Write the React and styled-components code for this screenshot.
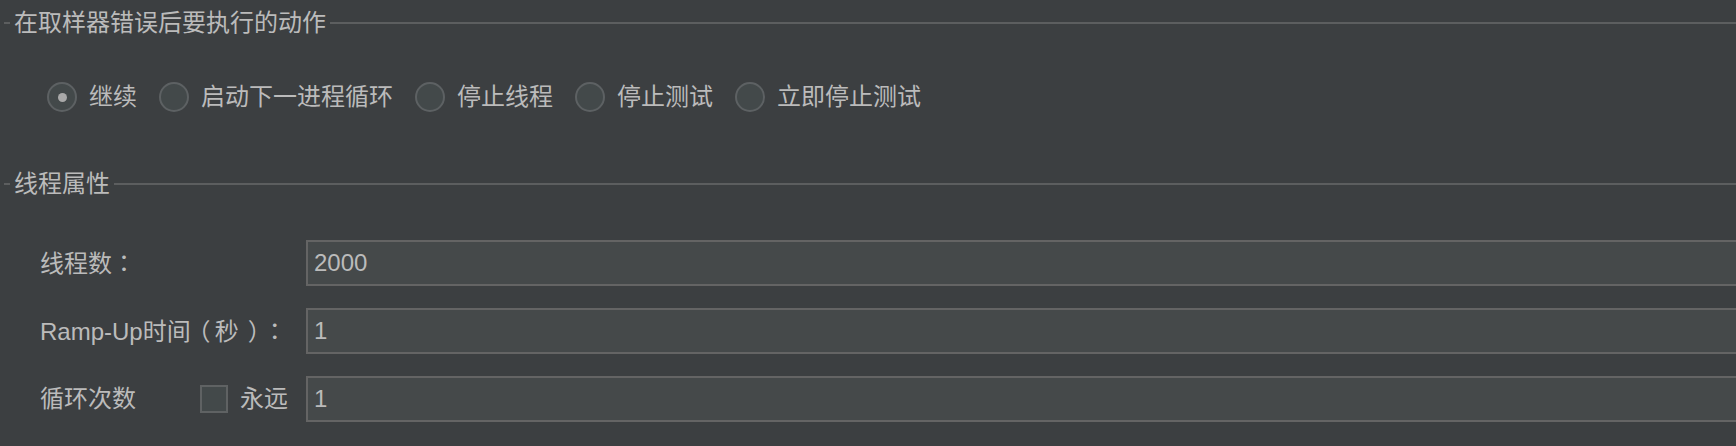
import React from "react";
import styled, { createGlobalStyle } from "styled-components";

const GlobalStyle = createGlobalStyle`
  html, body {
    margin: 0;
    padding: 0;
    background: #3c3f41;
    overflow: hidden;
  }
  body {
    font-family: "Liberation Sans", "Noto Sans CJK SC", sans-serif;
    color: #bbbbbb;
    text-spacing-trim: space-all;
  }
`;

const Page = styled.div`
  width: 1736px;
  height: 446px;
  padding-top: 8px;
  box-sizing: border-box;
  overflow: hidden;
`;

const Legend = styled.div`
  display: flex;
  align-items: center;
  height: 30px;
  margin-top: ${(p) => p.$top || 0}px;
  font-size: 24px;
  line-height: 30px;

  &::before {
    content: "";
    width: 6px;
    height: 2px;
    margin-left: 4px;
    margin-right: 4px;
    background: #5c5e5f;
  }
  &::after {
    content: "";
    flex: 1;
    height: 2px;
    margin-left: 4px;
    background: #5c5e5f;
  }
`;

const RadioRow = styled.div`
  display: flex;
  align-items: center;
  height: 46px;
  margin-top: 36px;
  padding-left: 47px;
  gap: 22px;
`;

const Choice = styled.label`
  display: flex;
  align-items: center;
  gap: 12px;
  font-size: 24px;
  line-height: 30px;
`;

const Radio = styled.span`
  width: 30px;
  height: 30px;
  box-sizing: border-box;
  border-radius: 50%;
  border: 2px solid #5d6163;
  background: #43494a;
  display: flex;
  align-items: center;
  justify-content: center;

  &::after {
    content: "";
    display: ${(p) => (p.$checked ? "block" : "none")};
    width: 9px;
    height: 9px;
    border-radius: 50%;
    background: #a9a9a9;
  }
`;

const Form = styled.div`
  display: flex;
  flex-direction: column;
  gap: 22px;
  margin-top: 41px;
`;

const Row = styled.div`
  display: flex;
  align-items: center;
  padding-left: 40px;
  gap: 18px;
`;

const Label = styled.div`
  width: 248px;
  display: flex;
  align-items: center;
  justify-content: space-between;
  font-size: 24px;
  line-height: 30px;
  white-space: nowrap;
`;

/* full-width punctuation set in a 24px cell, placed like the original UI font */
const Punct = styled.span`
  display: inline-block;
  width: 24px;
  box-sizing: border-box;
  font-family: "Noto Sans CJK TC", "Noto Sans CJK SC", sans-serif;
  font-feature-settings: ${(p) => (p.$pad !== undefined ? '"palt"' : "normal")};
  text-align: ${(p) => (p.$pad !== undefined ? "left" : "center")};
  padding-left: ${(p) => p.$pad || 0}px;
`;

const Forever = styled.span`
  display: flex;
  align-items: center;
  gap: 12px;
`;

const Checkbox = styled.span`
  width: 28px;
  height: 28px;
  box-sizing: border-box;
  border: 2px solid #5f6263;
  background: #43494a;
`;

const Field = styled.div`
  flex: 1;
  height: 46px;
  box-sizing: border-box;
  margin-right: -10px;
  border: 2px solid #646464;
  background: #45494a;
  padding-left: 6px;
  display: flex;
  align-items: center;
  font-size: 24px;
  color: #bbbbbb;
`;

const actions = ["继续", "启动下一进程循环", "停止线程", "停止测试", "立即停止测试"];

export default function App() {
  return (
    <>
      <GlobalStyle />
      <Page>
        <Legend>在取样器错误后要执行的动作</Legend>
        <RadioRow>
          {actions.map((a, i) => (
            <Choice key={a}>
              <Radio $checked={i === 0} />
              {a}
            </Choice>
          ))}
        </RadioRow>

        <Legend $top={49}>线程属性</Legend>
        <Form>
          <Row>
            <Label>
              <span>
                线程数<Punct>：</Punct>
              </span>
            </Label>
            <Field>2000</Field>
          </Row>
          <Row>
            <Label>
              <span>
                Ramp-Up时间<Punct $pad={7}>（</Punct>秒
                <Punct $pad={10}>）</Punct>
                <Punct>：</Punct>
              </span>
            </Label>
            <Field>1</Field>
          </Row>
          <Row>
            <Label>
              循环次数
              <Forever>
                <Checkbox />
                永远
              </Forever>
            </Label>
            <Field>1</Field>
          </Row>
        </Form>
      </Page>
    </>
  );
}
